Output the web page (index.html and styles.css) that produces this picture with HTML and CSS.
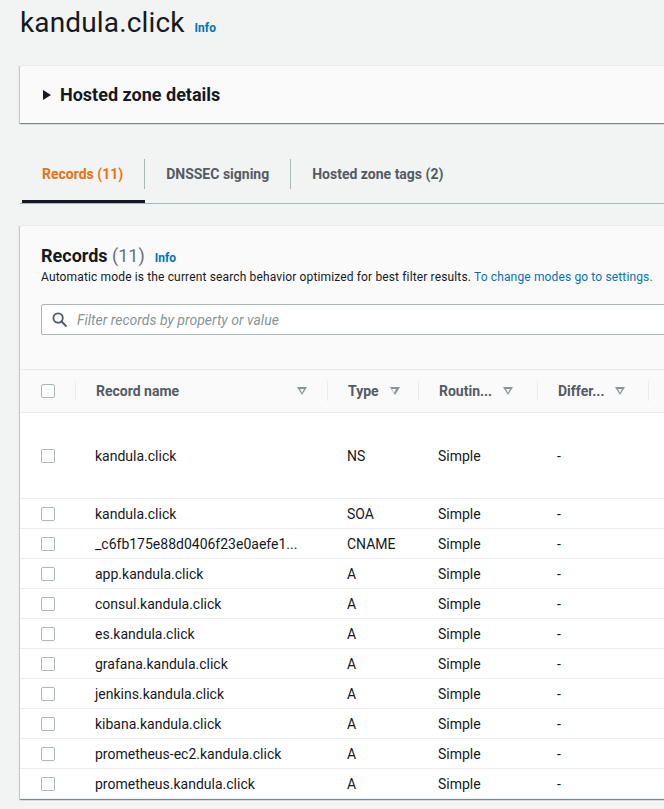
FILE: index.html
```html
<!DOCTYPE html>
<html lang="en">
<head>
<meta charset="utf-8">
<title>kandula.click</title>
<link rel="stylesheet" href="styles.css">
</head>
<body>
<div class="page">
  <div class="title-row">
    <h1 class="title">kandula.click</h1>
    <a class="info-link">Info</a>
  </div>

  <div class="panel zone-panel">
    <span class="caret"></span>
    <h2 class="zone-title">Hosted zone details</h2>
  </div>

  <div class="tabs">
    <div class="tab active"><span class="tab-label">Records (11)</span></div>
    <div class="tab"><span class="tab-label">DNSSEC signing</span></div>
    <div class="tab"><span class="tab-label last">Hosted zone tags (2)</span></div>
  </div>

  <div class="panel records-panel">
    <div class="records-head">
      <div class="records-title-row">
        <h2 class="records-title">Records <span class="count">(11)</span></h2>
        <a class="info-link small">Info</a>
      </div>
      <p class="subtitle">Automatic mode is the current search behavior optimized for best filter results. <a class="link">To change modes go to settings.</a></p>
      <div class="search">
        <svg class="search-icon" width="15" height="15" viewBox="0 0 16 16" aria-hidden="true">
          <circle cx="6.5" cy="6.5" r="5" fill="none" stroke="#545b64" stroke-width="2"/>
          <path d="M10.2 10.2 L14.8 14.8" stroke="#545b64" stroke-width="2.2" stroke-linecap="round"/>
        </svg>
        <span class="placeholder">Filter records by property or value</span>
      </div>
    </div>

    <table class="records">
      <colgroup>
        <col class="c-check"><col class="c-name"><col class="c-type"><col class="c-route"><col class="c-diff"><col class="c-rest">
      </colgroup>
      <thead>
        <tr>
          <th class="check-cell"><span class="checkbox"></span></th>
          <th><div class="th-in"><span>Record name</span><span class="sort"></span></div></th>
          <th><div class="th-in compact"><span>Type</span><span class="sort"></span></div></th>
          <th><div class="th-in compact"><span>Routin...</span><span class="sort"></span></div></th>
          <th><div class="th-in compact"><span>Differ...</span><span class="sort"></span></div></th>
          <th><div class="th-in"><span></span></div></th>
        </tr>
      </thead>
      <tbody>
        <tr class="tall"><td class="check-cell"><span class="checkbox"></span></td><td>kandula.click</td><td>NS</td><td>Simple</td><td>-</td><td></td></tr>
        <tr><td class="check-cell"><span class="checkbox"></span></td><td>kandula.click</td><td>SOA</td><td>Simple</td><td>-</td><td></td></tr>
        <tr><td class="check-cell"><span class="checkbox"></span></td><td>_c6fb175e88d0406f23e0aefe1...</td><td>CNAME</td><td>Simple</td><td>-</td><td></td></tr>
        <tr><td class="check-cell"><span class="checkbox"></span></td><td>app.kandula.click</td><td>A</td><td>Simple</td><td>-</td><td></td></tr>
        <tr><td class="check-cell"><span class="checkbox"></span></td><td>consul.kandula.click</td><td>A</td><td>Simple</td><td>-</td><td></td></tr>
        <tr><td class="check-cell"><span class="checkbox"></span></td><td>es.kandula.click</td><td>A</td><td>Simple</td><td>-</td><td></td></tr>
        <tr><td class="check-cell"><span class="checkbox"></span></td><td>grafana.kandula.click</td><td>A</td><td>Simple</td><td>-</td><td></td></tr>
        <tr><td class="check-cell"><span class="checkbox"></span></td><td>jenkins.kandula.click</td><td>A</td><td>Simple</td><td>-</td><td></td></tr>
        <tr><td class="check-cell"><span class="checkbox"></span></td><td>kibana.kandula.click</td><td>A</td><td>Simple</td><td>-</td><td></td></tr>
        <tr><td class="check-cell"><span class="checkbox"></span></td><td>prometheus-ec2.kandula.click</td><td>A</td><td>Simple</td><td>-</td><td></td></tr>
        <tr><td class="check-cell"><span class="checkbox"></span></td><td>prometheus.kandula.click</td><td>A</td><td>Simple</td><td>-</td><td></td></tr>
      </tbody>
    </table>
  </div>
</div>
</body>
</html>
```

FILE: styles.css
```css
html, body {
  margin: 0;
  padding: 0;
  overflow: hidden;
}
body {
  background: #f2f3f3;
  font-family: Roboto, "Liberation Sans", sans-serif;
  color: #16191f;
  width: 664px;
  height: 809px;
}
.page {
  padding-left: 20px;
  width: 1000px;
}
.title-row {
  display: flex;
  align-items: baseline;
  gap: 10px;
  padding-top: 5px;
  height: 36px;
}
.title {
  margin: 0;
  font-size: 28px;
  font-weight: 400;
  line-height: 36px;
  letter-spacing: 0.15px;
}
.info-link {
  color: #0073bb;
  font-size: 12px;
  font-weight: 700;
}
.panel {
  background: #fafafa;
  border-top: 1px solid #eaeded;
  box-shadow: 0 1px 1px 0 rgba(0, 28, 36, 0.3), 1px 1px 1px 0 rgba(0, 28, 36, 0.15), -1px 1px 1px 0 rgba(0, 28, 36, 0.15);
}
.zone-panel {
  margin-top: 24px;
  height: 57px;
  display: flex;
  align-items: center;
  padding-left: 23px;
  gap: 9px;
}
.caret {
  width: 0;
  height: 0;
  border-top: 5px solid transparent;
  border-bottom: 5px solid transparent;
  border-left: 8px solid #16191f;
}
.zone-title {
  margin: 0;
  font-size: 18px;
  font-weight: 700;
  line-height: 24px;
}
.tabs {
  margin-top: 25px;
  display: flex;
  border-bottom: 1px solid #aab7b8;
  padding-left: 2px;
}
.tab {
  height: 52px;
  display: flex;
  align-items: center;
  border-bottom: 3px solid transparent;
}
.tab.active {
  border-bottom-color: #16191f;
}
.tab-label {
  display: block;
  line-height: 30px;
  padding: 0 21px 0 20px;
  border-right: 1px solid #aab7b8;
  font-size: 14px;
  font-weight: 700;
  color: #545b64;
}
.tab + .tab .tab-label {
  padding-left: 21px;
}
.tab-label.last {
  border-right: none;
}
.tab.active .tab-label {
  color: #ec7211;
}
.records-panel {
  margin-top: 21px;
  width: 980px;
}
.records-head {
  padding: 18px 0 34px 21px;
}
.records-title-row {
  display: flex;
  align-items: baseline;
  gap: 10px;
  height: 24px;
}
.records-title {
  margin: 0;
  font-size: 18px;
  font-weight: 700;
  line-height: 24px;
}
.count {
  font-weight: 400;
  color: #687078;
}
.subtitle {
  margin: 1px 0 0;
  font-size: 12px;
  line-height: 16px;
  letter-spacing: 0.14px;
  color: #16191f;
}
.link {
  color: #0073bb;
}
.search {
  margin-top: 19px;
  height: 29px;
  background: #fff;
  border: 1px solid #aab7b8;
  border-radius: 2px;
  display: flex;
  align-items: center;
  padding-left: 10px;
  gap: 10px;
}
.search-icon {
  display: block;
}
.placeholder {
  font-size: 14px;
  font-style: italic;
  color: #879596;
}
.records {
  border-collapse: collapse;
  table-layout: fixed;
  width: 980px;
  border-top: 1px solid #eaeded;
}
.c-check { width: 55px; }
.c-name { width: 252px; }
.c-type { width: 91px; }
.c-route { width: 119px; }
.c-diff { width: 111px; }
.records th {
  height: 42px;
  padding: 0;
  background: #fafafa;
  border-bottom: 1px solid #eaeded;
  text-align: left;
  font-size: 14px;
  font-weight: 700;
  color: #545b64;
}
.th-in {
  display: flex;
  align-items: center;
  justify-content: space-between;
  height: 20px;
  padding: 0 20px 0 20px;
  border-left: 1px solid #eaeded;
}
.th-in.compact {
  justify-content: flex-start;
  gap: 11px;
}
.sort {
  width: 0;
  height: 0;
  position: relative;
  border-left: 5px solid transparent;
  border-right: 5px solid transparent;
  border-top: 8px solid #879596;
}
.sort::after {
  content: "";
  position: absolute;
  left: -2.5px;
  top: -6.5px;
  border-left: 2.5px solid transparent;
  border-right: 2.5px solid transparent;
  border-top: 4px solid #fafafa;
}
.records td {
  height: 29px;
  padding: 0 0 0 20px;
  background: #fff;
  border-bottom: 1px solid #eaeded;
  font-size: 14px;
  color: #16191f;
  white-space: nowrap;
}
.records tr.tall td {
  height: 85px;
}
.records .check-cell {
  padding: 0 0 0 21px;
}
.checkbox {
  display: block;
  width: 12px;
  height: 12px;
  border: 1px solid #aab7b8;
  border-radius: 2px;
  background: #fff;
}
```
